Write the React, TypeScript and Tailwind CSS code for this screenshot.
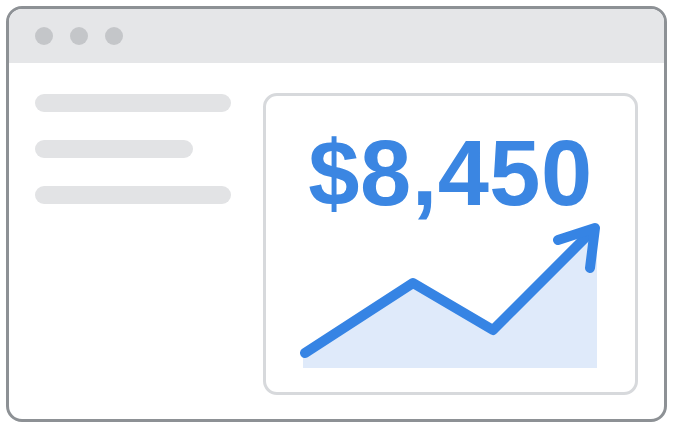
import React from 'react';

const Bar = ({ w }: { w: string }) => (
  <div className={`h-[18px] rounded-full bg-[#e2e3e5] ${w}`} />
);

const Chart = () => (
  <svg
    viewBox="0 0 369 173"
    className="block w-[369px] h-[173px]"
    fill="none"
    xmlns="http://www.w3.org/2000/svg"
  >
    <polygon
      points="37,149 37,135 147,64 227,111 331,7 331,149"
      fill="#dfeafa"
    />
    <polyline
      points="39,134 147,64 227,111 327,11"
      stroke="#3684e4"
      strokeWidth="10"
      strokeLinecap="round"
      strokeLinejoin="round"
    />
    <polyline
      points="292,21 329,9 324,49"
      stroke="#3684e4"
      strokeWidth="10"
      strokeLinecap="round"
      strokeLinejoin="round"
    />
  </svg>
);

export default function App() {
  return (
    <div className="w-[673px] h-[429px] bg-white p-[6px] font-['Liberation_Sans',Arial,sans-serif]">
      <div className="w-[661px] h-[416px] rounded-[16px] border-[3px] border-[#8d9195] overflow-hidden flex flex-col bg-white">
        {/* title bar */}
        <div className="h-[54px] shrink-0 bg-[#e5e6e8] flex items-center gap-[17px] pl-[26px]">
          <div className="w-[18px] h-[18px] rounded-full bg-[#c4c6c9]" />
          <div className="w-[18px] h-[18px] rounded-full bg-[#c4c6c9]" />
          <div className="w-[18px] h-[18px] rounded-full bg-[#c4c6c9]" />
        </div>
        {/* body */}
        <div className="flex flex-1 pl-[26px] pr-[26px] pt-[30px]">
          <div className="w-[228px] shrink-0 flex flex-col gap-[28px] pt-[1px]">
            <Bar w="w-[196px]" />
            <Bar w="w-[158px]" />
            <Bar w="w-[196px]" />
          </div>
          <div className="w-[375px] h-[302px] rounded-[14px] border-[3px] border-[#d7d9dc] flex flex-col items-center">
            <div className="mt-[31px] text-[92px] leading-none font-bold text-[#3b86e2] tracking-[0.5px]">
              $8,450
            </div>
            <Chart />
          </div>
        </div>
      </div>
    </div>
  );
}
